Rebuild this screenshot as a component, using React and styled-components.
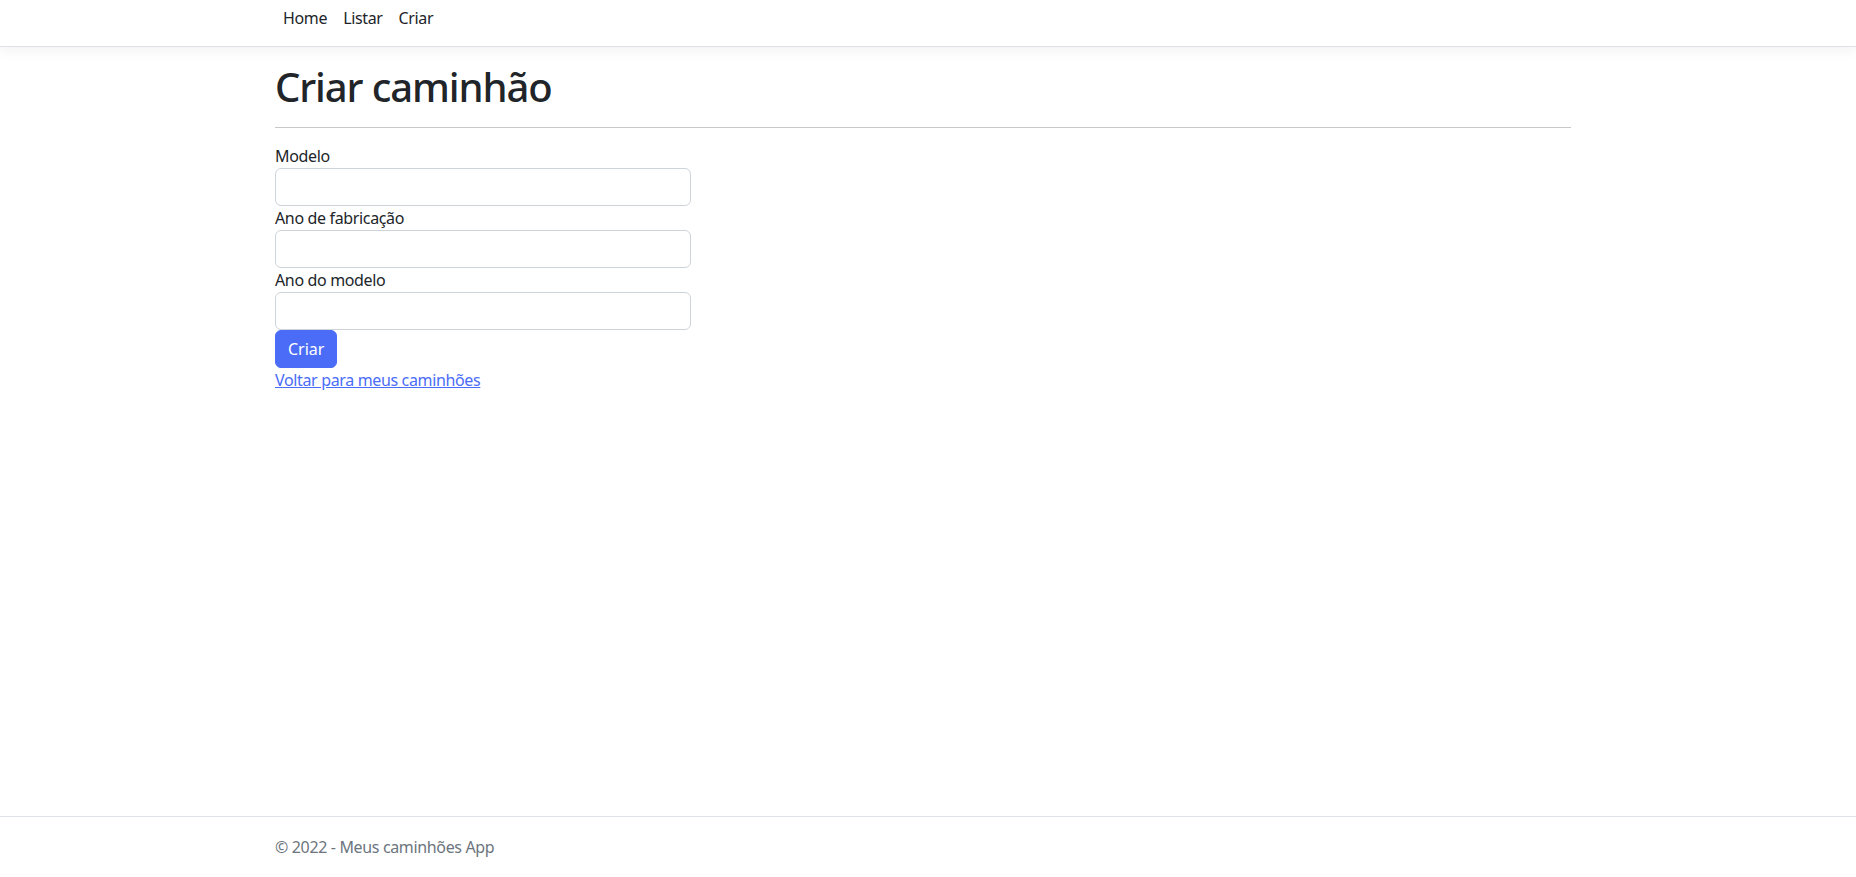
import React from 'react';
import styled, { createGlobalStyle } from 'styled-components';

const GlobalStyle = createGlobalStyle`
  * {
    box-sizing: border-box;
  }
  html, body {
    margin: 0;
    padding: 0;
    background: #fff;
  }
  body {
    font-family: "Noto Sans", "Open Sans", sans-serif;
    font-size: 16px;
    line-height: 1.5;
    letter-spacing: -0.35px;
    color: #212529;
  }
`;

const Page = styled.div`
  min-height: 100vh;
  display: flex;
  flex-direction: column;
`;

const Nav = styled.nav`
  height: 47px;
  border-bottom: 1px solid #dee2e6;
  box-shadow: 0 0.25rem 0.75rem rgba(0, 0, 0, 0.05);
  background: #fff;
  margin-bottom: 16px;
`;

const Container = styled.div`
  width: 1296px;
  margin-left: 275px;
`;

const NavList = styled.ul`
  display: flex;
  margin: 0;
  padding: 6px 0 0;
  list-style: none;
`;

const NavLink = styled.a`
  display: block;
  padding: 0 8px;
  color: #212529;
  text-decoration: none;
  font-size: 16px;
  line-height: 24px;
`;

const Title = styled.h1`
  margin: 0 0 8px;
  font-size: 40px;
  line-height: 48px;
  font-weight: 500;
  letter-spacing: -1.1px;
`;

const Rule = styled.hr`
  margin: 16px 0;
  border: 0;
  border-top: 1px solid #c8c8c8;
`;

const Form = styled.form`
  display: flex;
  flex-direction: column;
  align-items: flex-start;
  width: 416px;
`;

const Label = styled.label`
  display: block;
  line-height: 24px;
`;

const Input = styled.input`
  display: block;
  width: 416px;
  height: 38px;
  padding: 6px 12px;
  font: inherit;
  color: #212529;
  border: 1px solid #ced4da;
  border-radius: 6px;
  background: #fff;
`;

const Button = styled.button`
  height: 38px;
  padding: 6px 12px;
  font: inherit;
  line-height: 24px;
  color: #fff;
  background: #4a6cf7;
  border: 1px solid #4a6cf7;
  border-radius: 6px;
`;

const BackLink = styled.a`
  display: block;
  color: #4a6cf7;
  text-decoration: underline;
  line-height: 24px;
`;

const Footer = styled.footer`
  margin-top: auto;
  height: 61px;
  border-top: 1px solid #dee2e6;
  color: #6c757d;
  line-height: 60px;
`;

export default function App() {
  return (
    <>
      <GlobalStyle />
      <Page>
        <Nav>
          <Container>
            <NavList>
              <li><NavLink href="#">Home</NavLink></li>
              <li><NavLink href="#">Listar</NavLink></li>
              <li><NavLink href="#">Criar</NavLink></li>
            </NavList>
          </Container>
        </Nav>

        <Container>
          <Title>Criar caminhão</Title>
          <Rule />
          <Form onSubmit={(e) => e.preventDefault()}>
            <Label htmlFor="modelo">Modelo</Label>
            <Input id="modelo" type="text" />
            <Label htmlFor="anoFab">Ano de fabricação</Label>
            <Input id="anoFab" type="text" />
            <Label htmlFor="anoMod">Ano do modelo</Label>
            <Input id="anoMod" type="text" />
            <Button type="submit">Criar</Button>
          </Form>
          <BackLink href="#">Voltar para meus caminhões</BackLink>
        </Container>

        <Footer>
          <Container>© 2022 - Meus caminhões App</Container>
        </Footer>
      </Page>
    </>
  );
}
